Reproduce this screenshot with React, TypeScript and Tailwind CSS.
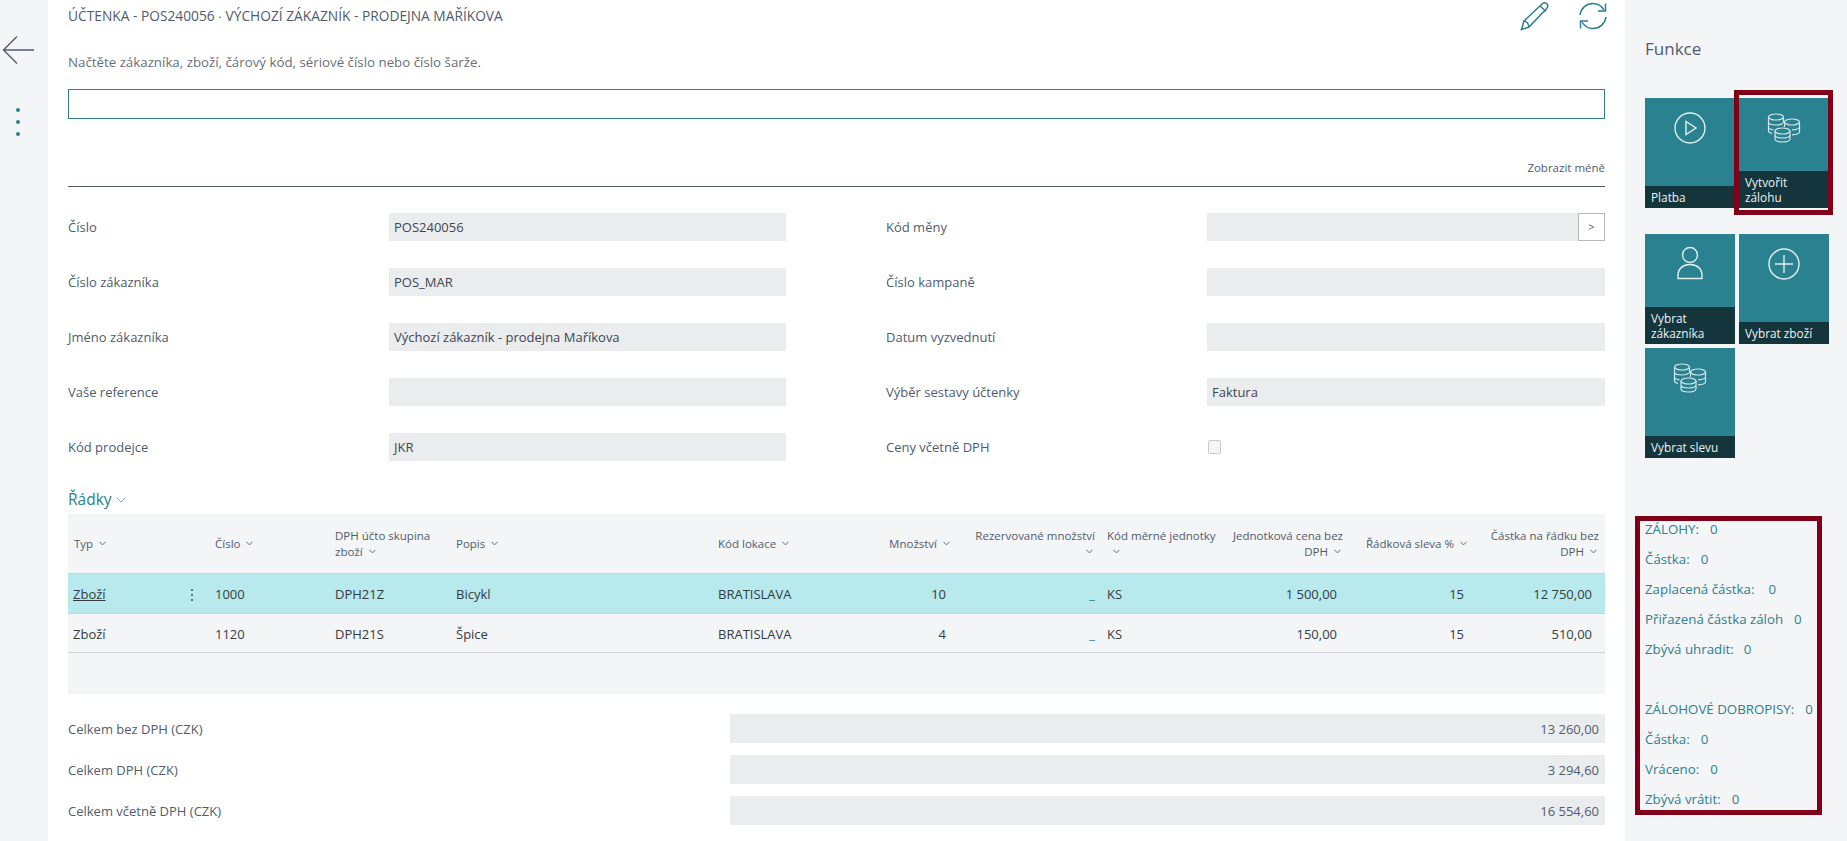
import { ChevronDown } from 'lucide-react';

const coins = (
  <svg className="mt-[2px]" width="34" height="30" viewBox="0 0 34 30" fill="none" stroke="#d3e6e9" strokeWidth="1.2" aria-hidden="true">
    <ellipse cx="9" cy="4" rx="7.5" ry="3" />
    <path d="M1.5 4v14c0 1 1.5 2 3.5 2.500M16.500 4v6M1.500 9c0 1.700 3.400 3 7.500 3 3 0 5.500-.7 6.800-1.700M1.500 14c0 1.500 2 2.600 5 2.900" />
    <ellipse cx="25" cy="9" rx="7.500" ry="3" />
    <path d="M17.500 9v5M32.500 9v10c0 1.300-3 2.500-7.500 2.800M32.500 14c0 1.300-3 2.500-7.500 2.800" />
    <ellipse cx="15.500" cy="18" rx="7.500" ry="3" />
    <path d="M8 18v8c0 1.700 3.400 3 7.500 3s7.500-1.300 7.500-3v-8M8 22c0 1.700 3.400 3 7.500 3s7.500-1.300 7.500-3" />
  </svg>
);

const playIcon = (
  <svg width="34" height="34" viewBox="0 0 34 34" fill="none" stroke="#e3f0f2" strokeWidth="1.400" aria-hidden="true">
    <circle cx="17" cy="17" r="15" />
    <path d="M13 10.500v13l10-6.500z" />
  </svg>
);

const personIcon = (
  <svg className="-mt-px" width="28" height="34" viewBox="0 0 28 34" fill="none" stroke="#e3f0f2" strokeWidth="1.400" aria-hidden="true">
    <circle cx="14" cy="9" r="7.500" />
    <path d="M2 32.500v-3c0-7 5-11 12-11s12 4 12 11v3z" />
  </svg>
);

const plusIcon = (
  <svg width="34" height="34" viewBox="0 0 34 34" fill="none" stroke="#e3f0f2" strokeWidth="1.400" aria-hidden="true">
    <circle cx="17" cy="17" r="15" />
    <path d="M17 8v18M8 17h18" />
  </svg>
);

const cols =
  'grid grid-cols-[106px_35px_120px_121px_262px_128px_118px_143px_124px_124px_126px_130px]';

function Chev() {
  return <ChevronDown className="ml-1 inline-block h-[11px] w-[11px] align-[-1px]" strokeWidth={2} aria-hidden="true" />;
}

function Head({ children, right }: { children: React.ReactNode; right?: boolean }) {
  return (
    <div className={`flex items-center px-[6px] leading-4 ${right ? 'justify-end text-right' : ''}`}>
      <div>{children}</div>
    </div>
  );
}

function Row({
  selected,
  values,
}: {
  selected?: boolean;
  values: string[];
}) {
  const [typ, cislo, dph, popis, lokace, mnozstvi, jednotka, cena, sleva, castka] = values;
  return (
    <div
      className={`${cols} items-center border-b border-[#cfd1d4] text-[13px] text-[#333b42] ${
        selected ? 'h-[40px] bg-[#b7e9ed] pt-[2px]' : 'h-[39px] pt-[4px]'
      }`}
    >
      <div className={`px-[5px] ${selected ? 'underline' : ''}`}>{typ}</div>
      <div className="flex justify-center">
        {selected && (
          <svg width="4" height="14" viewBox="0 0 4 14" fill="#444b52" aria-hidden="true">
            <circle cx="2" cy="2" r="1" />
            <circle cx="2" cy="7" r="1" />
            <circle cx="2" cy="12" r="1" />
          </svg>
        )}
      </div>
      <div className="px-[6px]">{cislo}</div>
      <div className="px-[6px]">{dph}</div>
      <div className="px-[6px]">{popis}</div>
      <div className="px-[6px]">{lokace}</div>
      <div className="pr-[12px] text-right">{mnozstvi}</div>
      <div className="pr-[6px] text-right text-[#2a818f]">_</div>
      <div className="px-[6px]">{jednotka}</div>
      <div className="pr-[12px] text-right">{cena}</div>
      <div className="pr-[11px] text-right">{sleva}</div>
      <div className="pr-[13px] text-right">{castka}</div>
    </div>
  );
}

function Field({ label, value, children }: { label: string; value?: string; children?: React.ReactNode }) {
  return (
    <div className="flex h-[28px] items-center">
      <div className="w-[321px] pt-[2px] text-[13px] text-[#505c6d]">{label}</div>
      <div className="relative flex h-[28px] flex-1 items-center bg-[#ebecee] px-[5px] pt-[2px] text-[13px] text-[#3c4650]">
        {value}
        {children}
      </div>
    </div>
  );
}

function Total({ label, value }: { label: string; value: string }) {
  return (
    <div className="flex h-[29px] items-center">
      <div className="w-[662px] pt-[2px] text-[13px] text-[#505c6d]">{label}</div>
      <div className="flex h-[29px] flex-1 items-center justify-end bg-[#ebecee] px-[6px] pt-[2px] text-[13px] text-[#505c6d]">
        {value}
      </div>
    </div>
  );
}

function Tile({ label, lines, icon }: { label: React.ReactNode; lines: 1 | 2; icon: React.ReactNode }) {
  return (
    <div className="flex h-[110px] w-[90px] flex-col bg-[#2a818f]">
      <div className="flex flex-1 justify-center pt-[13px]">
        <div>{icon}</div>
      </div>
      <div
        className={`flex flex-col justify-center bg-[#13353b] px-[6px] text-[11.800px] font-medium leading-[15px] text-[#eef4f5] ${
          lines === 2 ? 'h-[37px]' : 'h-[22px]'
        }`}
      >
        {label}
      </div>
    </div>
  );
}

function Stat({ label, gap }: { label: string; gap: string }) {
  return (
    <div className="flex h-[30px] items-center whitespace-nowrap">
      {label}
      <span className={gap}>0</span>
    </div>
  );
}

export default function App() {
  return (
    <div className="flex h-[841px] w-[1847px] overflow-hidden bg-white font-['Open_Sans',sans-serif]">
      <aside className="flex w-[48px] flex-col bg-[#f4f5f7]">
        <svg className="ml-[2px] mt-[35px]" width="33" height="30" viewBox="0 0 33 30" fill="none" stroke="#505c6d" strokeWidth="1.400" aria-hidden="true">
          <path d="M32 15H2M15 1.500 1.500 15 15 28.500" />
        </svg>
        <svg className="ml-[16px] mt-[43px]" width="4" height="28" viewBox="0 0 4 28" fill="#2a818f" aria-hidden="true">
          <circle cx="2" cy="2" r="2" />
          <circle cx="2" cy="14" r="2" />
          <circle cx="2" cy="26" r="2" />
        </svg>
      </aside>

      <main className="flex w-[1577px] flex-col px-5">
        <div className="flex h-[32px] items-center justify-between">
          <h1 className="text-[13.750px] text-[#505c6d]">ÚČTENKA - POS240056 ∙ VÝCHOZÍ ZÁKAZNÍK - PRODEJNA MAŘÍKOVA</h1>
          <div className="-mr-[3px] flex items-center gap-[29px]">
            <svg width="29" height="29" viewBox="0 0 29 29" fill="none" stroke="#2a818f" strokeWidth="1.500" aria-hidden="true">
              <path d="M1.500 27.500 4 19 22 2c2-1.700 3.800-1.500 5 0s1 3.200-.5 4.800L9 25z" />
              <path d="M4 19c2.500.3 4.500 2.500 5 6M20 4l6 5.500" />
            </svg>
            <svg width="30" height="30" viewBox="0 0 30 30" fill="none" stroke="#2a818f" strokeWidth="1.500" aria-hidden="true">
              <path d="M2 14C3 7 8.500 2.500 15 2.500c4.700 0 8.700 2.500 11 6.500" />
              <path d="M27.500 2.500V10H20" />
              <path d="M28 16c-1 7-6.500 11.500-13 11.500-4.700 0-8.700-2.500-11-6.500" />
              <path d="M2.500 27.500V20H10" />
            </svg>
          </div>
        </div>

        <p className="mt-[21px] flex h-[20px] items-center text-[13.300px] text-[#6a6f76]">
          Načtěte zákazníka, zboží, čárový kód, sériové číslo nebo číslo šarže.
        </p>
        <div className="mt-4 h-[30px] border border-[#2f7d85]" />

        <div className="mt-10 flex h-[18px] items-center justify-end text-[11.500px] text-[#505c6d]">Zobrazit méně</div>
        <div className="mt-[9px] border-b border-[#505c6d]" />

        <div className="mt-[26px] grid grid-cols-[718px_719px] gap-x-[100px]">
          <div className="flex flex-col gap-[27px]">
            <Field label="Číslo" value="POS240056" />
            <Field label="Číslo zákazníka" value="POS_MAR" />
            <Field label="Jméno zákazníka" value="Výchozí zákazník - prodejna Maříkova" />
            <Field label="Vaše reference" />
            <Field label="Kód prodejce" value="JKR" />
          </div>
          <div className="flex flex-col gap-[27px]">
            <Field label="Kód měny">
              <div className="absolute right-0 top-0 flex h-[28px] w-[27px] items-center justify-center border border-[#b5b8bc] bg-white text-[11px] text-[#505c6d]">
                &gt;
              </div>
            </Field>
            <Field label="Číslo kampaně" />
            <Field label="Datum vyzvednutí" />
            <Field label="Výběr sestavy účtenky" value="Faktura" />
            <div className="flex h-[28px] items-center">
              <div className="w-[322px] pt-[2px] text-[13px] text-[#505c6d]">Ceny včetně DPH</div>
              <div className="h-[14px] w-[13px] rounded-[2px] border border-[#c8cacd] bg-[#f4f5f6]" />
            </div>
          </div>
        </div>

        <div className="mt-[27px] flex h-[24px] items-center text-[15.500px] text-[#2a818f]">
          Řádky
          <ChevronDown className="ml-[1px] h-4 w-4 text-[#2a818f]" strokeWidth={1} aria-hidden="true" />
        </div>

        <div className="mt-[2px] bg-[#f4f5f7]">
          <div className={`${cols} h-[60px] border-b border-[#cfd1d4] text-[11.500px] text-[#505c6d]`}>
            <Head>Typ<Chev /></Head>
            <div />
            <Head>Číslo<Chev /></Head>
            <Head>DPH účto skupina<br />zboží<Chev /></Head>
            <Head>Popis<Chev /></Head>
            <Head>Kód lokace<Chev /></Head>
            <Head right>Množství<Chev /></Head>
            <Head right>Rezervované množství<br /><Chev /></Head>
            <Head>Kód měrné jednotky<br /><Chev /></Head>
            <Head right>Jednotková cena bez<br />DPH<Chev /></Head>
            <Head right>Řádková sleva %<Chev /></Head>
            <Head right>Částka na řádku bez<br />DPH<Chev /></Head>
          </div>
          <Row selected values={['Zboží', '1000', 'DPH21Z', 'Bicykl', 'BRATISLAVA', '10', 'KS', '1 500,00', '15', '12 750,00']} />
          <Row values={['Zboží', '1120', 'DPH21S', 'Špice', 'BRATISLAVA', '4', 'KS', '150,00', '15', '510,00']} />
          <div className="h-[41px]" />
        </div>

        <div className="mt-5 flex flex-col gap-3">
          <Total label="Celkem bez DPH (CZK)" value="13 260,00" />
          <Total label="Celkem DPH (CZK)" value="3 294,60" />
          <Total label="Celkem včetně DPH (CZK)" value="16 554,60" />
        </div>
      </main>

      <aside className="flex-1 bg-[#f4f5f7] pl-5">
        <h2 className="mt-[35px] flex h-[28px] items-center text-[17px] text-[#505c6d]">Funkce</h2>

        <div className="mt-[35px] grid grid-cols-[90px_90px] gap-x-1">
          <Tile label="Platba" lines={1} icon={playIcon} />
          <div className="relative">
            <Tile label={<>Vytvořit<br />zálohu</>} lines={2} icon={coins} />
            <div className="absolute -left-[5px] -top-[8px] h-[125px] w-[99px] border-[5px] border-[#7f0018]" />
          </div>
        </div>

        <div className="mt-[26px] grid grid-cols-[90px_90px] gap-1">
          <Tile label={<>Vybrat<br />zákazníka</>} lines={2} icon={personIcon} />
          <Tile label="Vybrat zboží" lines={1} icon={plusIcon} />
          <Tile label="Vybrat slevu" lines={1} icon={coins} />
        </div>

        <div className="relative mt-[57px] text-[13.300px] text-[#2a818f]">
          <Stat label="ZÁLOHY:" gap="ml-[11px]" />
          <Stat label="Částka:" gap="ml-[11px]" />
          <Stat label="Zaplacená částka:" gap="ml-[14px]" />
          <Stat label="Přiřazená částka záloh" gap="ml-[11px]" />
          <Stat label="Zbývá uhradit:" gap="ml-[10px]" />
          <div className="h-[30px]" />
          <Stat label="ZÁLOHOVÉ DOBROPISY:" gap="ml-[11px]" />
          <Stat label="Částka:" gap="ml-[11px]" />
          <Stat label="Vráceno:" gap="ml-[11px]" />
          <Stat label="Zbývá vrátit:" gap="ml-[11px]" />
          <div className="absolute -left-[10px] top-px h-[299px] w-[187px] border-[5px] border-[#7f0018]" />
        </div>
      </aside>
    </div>
  );
}
